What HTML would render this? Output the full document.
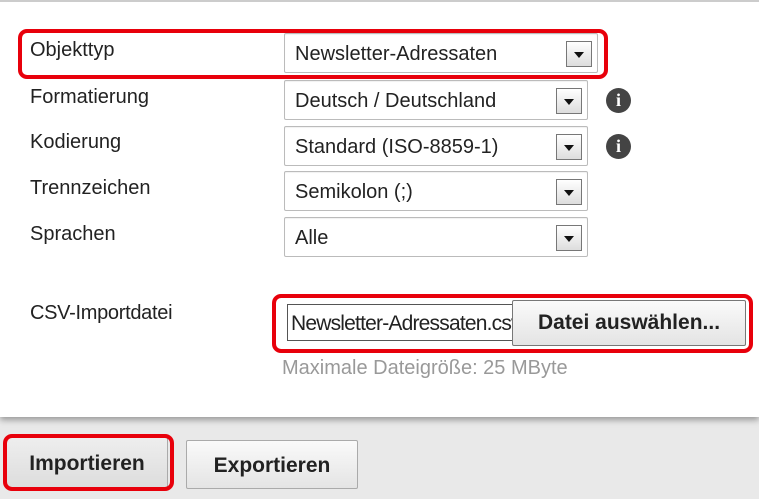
<!DOCTYPE html>
<html><head><meta charset="utf-8"><style>
*{margin:0;padding:0;box-sizing:border-box}
body{width:759px;height:499px;overflow:hidden;background:#e9e9e9;font-family:"Liberation Sans",Arial,sans-serif;position:relative;color:#222}
.panel{position:absolute;left:0;top:0;width:759px;height:417px;background:#fff;border-top:2px solid #ccc;box-shadow:0 3px 6px rgba(0,0,0,.35)}
.lbl{position:absolute;left:30px;font-size:20px;color:#222}
.sel{position:absolute;left:284px;width:304px;height:40px;border:1px solid #bbb;border-radius:2px;background:#fff;font-size:20px;padding:9px 0 0 10px;box-shadow:inset 0 1px 1px rgba(0,0,0,.06)}
.dd{position:absolute;right:5px;top:7px;width:26px;height:26px;border:1px solid #777;background:linear-gradient(#fff,#ddd)}
.dd:after{content:"";position:absolute;left:7px;top:10px;border-left:5px solid transparent;border-right:5px solid transparent;border-top:6px solid #111}
.info{position:absolute;left:606px;width:25px;height:25px;border-radius:50%;background:#444;color:#fff;font:bold 18px/25px "Liberation Serif",serif;text-align:center}
.red{position:absolute;border:4px solid #e8000b;border-radius:9px}
.btn{position:absolute;border:1px solid #aaa;border-radius:2px;background:linear-gradient(#fafafa,#e4e4e4);font-weight:bold;font-size:21px;text-align:center;color:#222}
</style></head><body>
<div class="panel">
<div class="lbl" style="top:37px">Objekttyp</div>
<div class="lbl" style="top:84px">Formatierung</div>
<div class="lbl" style="top:129px">Kodierung</div>
<div class="lbl" style="top:175px">Trennzeichen</div>
<div class="lbl" style="top:221px">Sprachen</div>
<div class="sel" style="top:31px;width:314px">Newsletter-Adressaten<div class="dd"></div></div>
<div class="sel" style="top:78px">Deutsch / Deutschland<div class="dd"></div></div>
<div class="sel" style="top:124px">Standard (ISO-8859-1)<div class="dd"></div></div>
<div class="sel" style="top:169px">Semikolon (;)<div class="dd"></div></div>
<div class="sel" style="top:215px">Alle<div class="dd"></div></div>
<div class="info" style="top:86px">i</div>
<div class="info" style="top:132px">i</div>
<div class="red" style="left:18px;top:27px;width:590px;height:50px"></div>
<div class="lbl" style="top:300px;font-size:20px;letter-spacing:-0.3px">CSV-Importdatei</div>
<div style="position:absolute;left:287px;top:302px;width:226px;height:37px;border:1px solid #555;background:#fff;font-size:21px;padding:7px 0 0 3px;overflow:hidden;white-space:nowrap;letter-spacing:-0.8px">Newsletter-Adressaten.csv</div>
<div class="btn" style="left:512px;top:298px;width:234px;height:46px;line-height:44px;border-color:#777">Datei auswählen...</div>
<div class="red" style="left:272px;top:292px;width:481px;height:59px"></div>
<div style="position:absolute;left:282px;top:355px;font-size:20px;color:#999">Maximale Dateigröße: 25 MByte</div>
</div>
<div class="btn" style="left:6px;top:437px;width:162px;height:51px;line-height:52px;background:linear-gradient(#eee,#ddd)">Importieren</div>
<div class="red" style="left:3px;top:434px;width:171px;height:57px"></div>
<div class="btn" style="left:186px;top:440px;width:172px;height:49px;line-height:49px">Exportieren</div>
</body></html>
